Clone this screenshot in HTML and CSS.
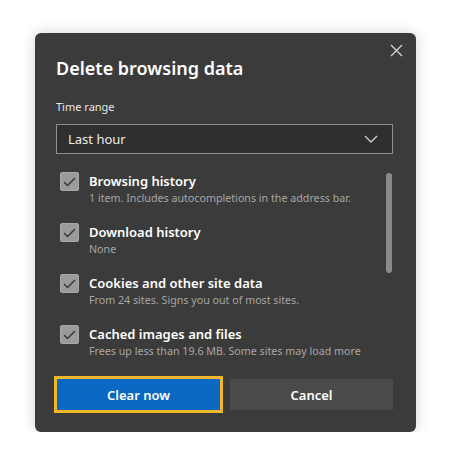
FILE: index.html
```html
<!DOCTYPE html>
<html>
	<head>
		<title>Delete browsing data</title>
		<link rel="stylesheet" href="styles.css">
	</head>
	<body>
		<div class="dialog">
			<div class="close">
				<svg width="13" height="13" viewBox="0 0 13 13"><path d="M1 1L12 12M12 1L1 12" stroke="#d6d6d6" stroke-width="1.3" fill="none"/></svg>
			</div>
			<h1 class="title">Delete browsing data</h1>
			<div class="label">Time range</div>
			<div class="select">
				<span>Last hour</span>
				<svg width="14" height="8" viewBox="0 0 14 8"><path d="M1 1L7 7L13 1" stroke="#d0d0d0" stroke-width="1.3" fill="none"/></svg>
			</div>
			<div class="list">
				<div class="items">
					<div class="item">
						<div class="check"><svg width="13" height="10" viewBox="0 0 13 10"><path d="M1 5L4.5 8.5L12 1" stroke="#3a3a3a" stroke-width="1.5" fill="none"/></svg></div>
						<div class="text">
							<div class="name">Browsing history</div>
							<div class="desc">1 item. Includes autocompletions in the address bar.</div>
						</div>
					</div>
					<div class="item">
						<div class="check"><svg width="13" height="10" viewBox="0 0 13 10"><path d="M1 5L4.5 8.5L12 1" stroke="#3a3a3a" stroke-width="1.5" fill="none"/></svg></div>
						<div class="text">
							<div class="name">Download history</div>
							<div class="desc">None</div>
						</div>
					</div>
					<div class="item">
						<div class="check"><svg width="13" height="10" viewBox="0 0 13 10"><path d="M1 5L4.5 8.5L12 1" stroke="#3a3a3a" stroke-width="1.5" fill="none"/></svg></div>
						<div class="text">
							<div class="name">Cookies and other site data</div>
							<div class="desc">From 24 sites. Signs you out of most sites.</div>
						</div>
					</div>
					<div class="item">
						<div class="check"><svg width="13" height="10" viewBox="0 0 13 10"><path d="M1 5L4.5 8.5L12 1" stroke="#3a3a3a" stroke-width="1.5" fill="none"/></svg></div>
						<div class="text">
							<div class="name">Cached images and files</div>
							<div class="desc">Frees up less than 19.6 MB. Some sites may load more</div>
						</div>
					</div>
				</div>
				<div class="scrollbar"></div>
			</div>
			<div class="buttons">
				<div class="btn primary">Clear now</div>
				<div class="btn">Cancel</div>
			</div>
		</div>
	</body>
</html>
```

FILE: styles.css
```css
body{
	margin: 0;
	background: #fff;
	font-family: "Noto Sans", "Open Sans", sans-serif;
	color: #fff;
}
.dialog{
	position: relative;
	box-sizing: border-box;
	width: 381px;
	height: 399px;
	margin: 33px 0 0 35px;
	padding: 22px 23px 0 21px;
	background: #3b3b3b;
	border-radius: 6px;
	box-shadow: 0 0 14px rgba(0,0,0,.18);
}
.close{
	position: absolute;
	top: 11px;
	right: 13px;
	width: 13px;
	height: 13px;
}
.close svg{
	display: block;
}
.title{
	margin: 0;
	font-size: 18px;
	font-weight: 600;
	line-height: 26px;
}
.label{
	margin-top: 17px;
	font-size: 11px;
	line-height: 18px;
	color: #e8e8e8;
}
.select{
	box-sizing: border-box;
	display: flex;
	align-items: center;
	justify-content: space-between;
	margin-top: 8px;
	height: 30px;
	padding: 0 14px 0 11px;
	border: 1px solid #8f8f8f;
	background: #2f2f2f;
	font-size: 13px;
	color: #ececec;
}
.list{
	display: flex;
	margin-top: 17px;
}
.items{
	flex: 1;
}
.item{
	display: flex;
	height: 51px;
}
.check{
	box-sizing: border-box;
	width: 19px;
	height: 19px;
	margin: 1px 10px 0 4px;
	background: #9b9b9b;
	border: 1px solid #a8a8a8;
	border-radius: 2px;
	display: flex;
	align-items: center;
	justify-content: center;
}
.name{
	font-size: 13px;
	font-weight: 600;
	line-height: 20px;
}
.desc{
	font-size: 10.7px;
	line-height: 15px;
	color: #a6a6a6;
}
.scrollbar{
	width: 6px;
	height: 100px;
	margin: 2px 1px 0 0;
	background: #8a8a8a;
	border-radius: 3px;
}
.buttons{
	display: flex;
	gap: 7px;
	margin-top: 1px;
	margin-left: -2px;
}
.btn{
	box-sizing: border-box;
	flex: 1;
	height: 31px;
	margin-top: 3px;
	display: flex;
	align-items: center;
	justify-content: center;
	background: #4a4a4a;
	font-size: 13px;
	font-weight: 600;
}
.btn.primary{
	flex: 0 0 169px;
	height: 37px;
	margin-top: 0;
	background: #0a67c2;
	border: 3px solid #f1b62a;
}
```
